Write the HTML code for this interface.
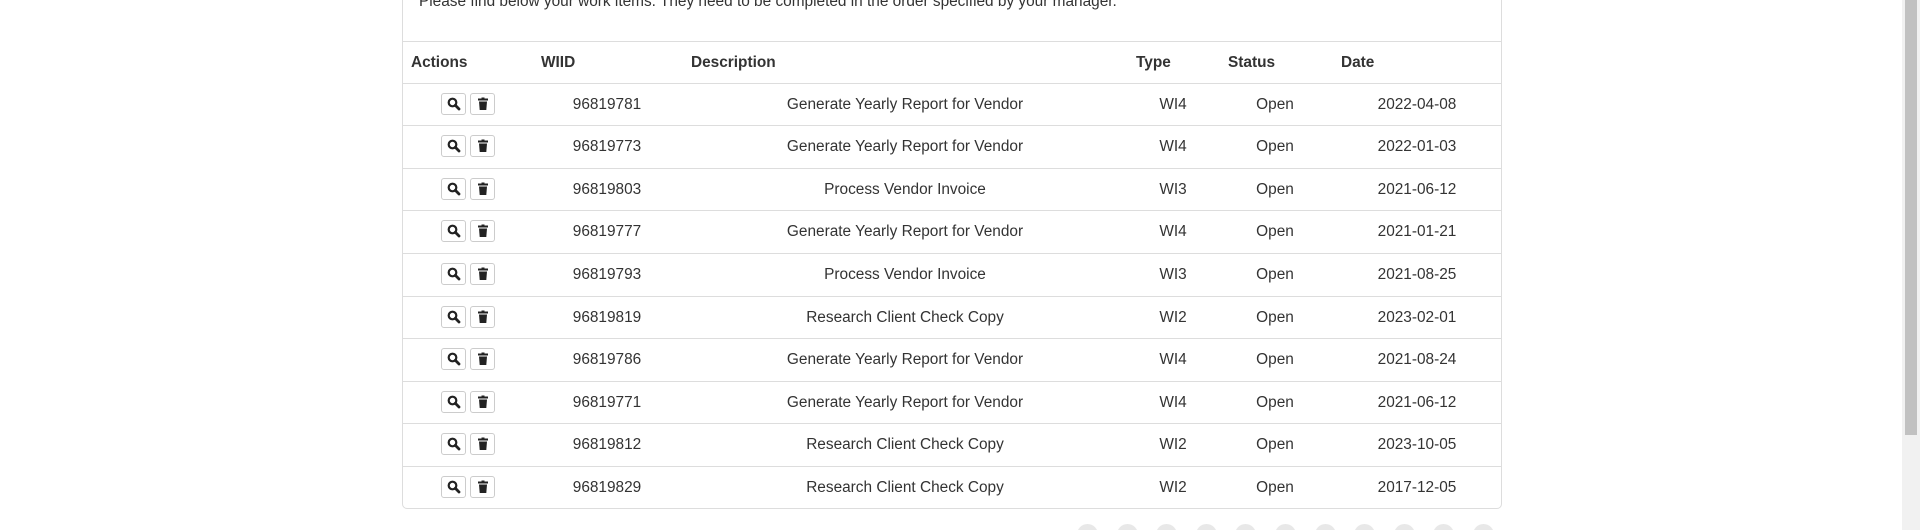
<!DOCTYPE html>
<html><head><meta charset="utf-8"><style>
html,body{margin:0;padding:0;width:1920px;height:530px;overflow:hidden;background:#fff;font-family:"Liberation Sans",Arial,sans-serif;color:#333;font-size:15.4px;}
.wrap{position:absolute;left:0;top:0;width:1920px;height:530px;overflow:hidden;}
.panel{position:absolute;left:402px;top:-10px;width:1098px;height:517px;border:1px solid #ddd;border-radius:0 0 5px 5px;}
.intro{position:absolute;left:419px;top:-7px;white-space:nowrap;}
.hline{position:absolute;left:403px;width:1098px;height:1px;background:#ddd;}
.hd{position:absolute;top:54px;font-weight:bold;white-space:nowrap;}
.row{position:absolute;left:403px;width:1098px;height:42px;border-top:1px solid #ddd;}
.c{position:absolute;top:12px;white-space:nowrap;transform:translateX(-50%);}
.btn{position:absolute;top:9px;width:25px;height:22px;border:1px solid #ccc;border-radius:3px;background:#fff;box-sizing:border-box;}
.btn svg{position:absolute;left:5px;top:3px;}
.dot{position:absolute;width:21px;height:21px;border-radius:50%;background:#e8e8e8;top:524px;}
.sb{position:absolute;left:1902px;top:0;width:18px;height:530px;background:#f1f1f1;}
.thumb{position:absolute;left:1905px;top:0;width:12px;height:435px;background:#c1c1c1;}
</style></head><body><div class="wrap">
<div class="panel"></div>
<div class="intro">Please find below your work items. They need to be completed in the order specified by your manager.</div>
<div class="hline" style="top:41px"></div>
<div class="hd" style="left:411px">Actions</div>
<div class="hd" style="left:541px">WIID</div>
<div class="hd" style="left:691px">Description</div>
<div class="hd" style="left:1136px">Type</div>
<div class="hd" style="left:1228px">Status</div>
<div class="hd" style="left:1341px">Date</div>

<div class="row" style="top:83px"><div class="btn" style="left:38px"><svg width="14" height="14" viewBox="0 0 14 14"><circle cx="5.5" cy="5.5" r="3.8" fill="none" stroke="#222" stroke-width="2.2"/><path d="M8.3 8.3 L12 12" stroke="#222" stroke-width="2.8" stroke-linecap="round"/></svg></div><div class="btn" style="left:67px"><svg width="14" height="14" viewBox="0 0 14 14"><rect x="2" y="1.5" width="10" height="2" fill="#222"/><rect x="5.5" y="0.5" width="3" height="1.5" fill="#222"/><path d="M3 4.5 H11 L10.3 13 H3.7 Z" fill="#222"/></svg></div><div class="c" style="left:204px">96819781</div><div class="c" style="left:502px">Generate Yearly Report for Vendor</div><div class="c" style="left:770px">WI4</div><div class="c" style="left:872px">Open</div><div class="c" style="left:1014px">2022-04-08</div></div>

<div class="row" style="top:125px"><div class="btn" style="left:38px"><svg width="14" height="14" viewBox="0 0 14 14"><circle cx="5.5" cy="5.5" r="3.8" fill="none" stroke="#222" stroke-width="2.2"/><path d="M8.3 8.3 L12 12" stroke="#222" stroke-width="2.8" stroke-linecap="round"/></svg></div><div class="btn" style="left:67px"><svg width="14" height="14" viewBox="0 0 14 14"><rect x="2" y="1.5" width="10" height="2" fill="#222"/><rect x="5.5" y="0.5" width="3" height="1.5" fill="#222"/><path d="M3 4.5 H11 L10.3 13 H3.7 Z" fill="#222"/></svg></div><div class="c" style="left:204px">96819773</div><div class="c" style="left:502px">Generate Yearly Report for Vendor</div><div class="c" style="left:770px">WI4</div><div class="c" style="left:872px">Open</div><div class="c" style="left:1014px">2022-01-03</div></div>

<div class="row" style="top:168px"><div class="btn" style="left:38px"><svg width="14" height="14" viewBox="0 0 14 14"><circle cx="5.5" cy="5.5" r="3.8" fill="none" stroke="#222" stroke-width="2.2"/><path d="M8.3 8.3 L12 12" stroke="#222" stroke-width="2.8" stroke-linecap="round"/></svg></div><div class="btn" style="left:67px"><svg width="14" height="14" viewBox="0 0 14 14"><rect x="2" y="1.5" width="10" height="2" fill="#222"/><rect x="5.5" y="0.5" width="3" height="1.5" fill="#222"/><path d="M3 4.5 H11 L10.3 13 H3.7 Z" fill="#222"/></svg></div><div class="c" style="left:204px">96819803</div><div class="c" style="left:502px">Process Vendor Invoice</div><div class="c" style="left:770px">WI3</div><div class="c" style="left:872px">Open</div><div class="c" style="left:1014px">2021-06-12</div></div>

<div class="row" style="top:210px"><div class="btn" style="left:38px"><svg width="14" height="14" viewBox="0 0 14 14"><circle cx="5.5" cy="5.5" r="3.8" fill="none" stroke="#222" stroke-width="2.2"/><path d="M8.3 8.3 L12 12" stroke="#222" stroke-width="2.8" stroke-linecap="round"/></svg></div><div class="btn" style="left:67px"><svg width="14" height="14" viewBox="0 0 14 14"><rect x="2" y="1.5" width="10" height="2" fill="#222"/><rect x="5.5" y="0.5" width="3" height="1.5" fill="#222"/><path d="M3 4.5 H11 L10.3 13 H3.7 Z" fill="#222"/></svg></div><div class="c" style="left:204px">96819777</div><div class="c" style="left:502px">Generate Yearly Report for Vendor</div><div class="c" style="left:770px">WI4</div><div class="c" style="left:872px">Open</div><div class="c" style="left:1014px">2021-01-21</div></div>

<div class="row" style="top:253px"><div class="btn" style="left:38px"><svg width="14" height="14" viewBox="0 0 14 14"><circle cx="5.5" cy="5.5" r="3.8" fill="none" stroke="#222" stroke-width="2.2"/><path d="M8.3 8.3 L12 12" stroke="#222" stroke-width="2.8" stroke-linecap="round"/></svg></div><div class="btn" style="left:67px"><svg width="14" height="14" viewBox="0 0 14 14"><rect x="2" y="1.5" width="10" height="2" fill="#222"/><rect x="5.5" y="0.5" width="3" height="1.5" fill="#222"/><path d="M3 4.5 H11 L10.3 13 H3.7 Z" fill="#222"/></svg></div><div class="c" style="left:204px">96819793</div><div class="c" style="left:502px">Process Vendor Invoice</div><div class="c" style="left:770px">WI3</div><div class="c" style="left:872px">Open</div><div class="c" style="left:1014px">2021-08-25</div></div>

<div class="row" style="top:296px"><div class="btn" style="left:38px"><svg width="14" height="14" viewBox="0 0 14 14"><circle cx="5.5" cy="5.5" r="3.8" fill="none" stroke="#222" stroke-width="2.2"/><path d="M8.3 8.3 L12 12" stroke="#222" stroke-width="2.8" stroke-linecap="round"/></svg></div><div class="btn" style="left:67px"><svg width="14" height="14" viewBox="0 0 14 14"><rect x="2" y="1.5" width="10" height="2" fill="#222"/><rect x="5.5" y="0.5" width="3" height="1.5" fill="#222"/><path d="M3 4.5 H11 L10.3 13 H3.7 Z" fill="#222"/></svg></div><div class="c" style="left:204px">96819819</div><div class="c" style="left:502px">Research Client Check Copy</div><div class="c" style="left:770px">WI2</div><div class="c" style="left:872px">Open</div><div class="c" style="left:1014px">2023-02-01</div></div>

<div class="row" style="top:338px"><div class="btn" style="left:38px"><svg width="14" height="14" viewBox="0 0 14 14"><circle cx="5.5" cy="5.5" r="3.8" fill="none" stroke="#222" stroke-width="2.2"/><path d="M8.3 8.3 L12 12" stroke="#222" stroke-width="2.8" stroke-linecap="round"/></svg></div><div class="btn" style="left:67px"><svg width="14" height="14" viewBox="0 0 14 14"><rect x="2" y="1.5" width="10" height="2" fill="#222"/><rect x="5.5" y="0.5" width="3" height="1.5" fill="#222"/><path d="M3 4.5 H11 L10.3 13 H3.7 Z" fill="#222"/></svg></div><div class="c" style="left:204px">96819786</div><div class="c" style="left:502px">Generate Yearly Report for Vendor</div><div class="c" style="left:770px">WI4</div><div class="c" style="left:872px">Open</div><div class="c" style="left:1014px">2021-08-24</div></div>

<div class="row" style="top:381px"><div class="btn" style="left:38px"><svg width="14" height="14" viewBox="0 0 14 14"><circle cx="5.5" cy="5.5" r="3.8" fill="none" stroke="#222" stroke-width="2.2"/><path d="M8.3 8.3 L12 12" stroke="#222" stroke-width="2.8" stroke-linecap="round"/></svg></div><div class="btn" style="left:67px"><svg width="14" height="14" viewBox="0 0 14 14"><rect x="2" y="1.5" width="10" height="2" fill="#222"/><rect x="5.5" y="0.5" width="3" height="1.5" fill="#222"/><path d="M3 4.5 H11 L10.3 13 H3.7 Z" fill="#222"/></svg></div><div class="c" style="left:204px">96819771</div><div class="c" style="left:502px">Generate Yearly Report for Vendor</div><div class="c" style="left:770px">WI4</div><div class="c" style="left:872px">Open</div><div class="c" style="left:1014px">2021-06-12</div></div>

<div class="row" style="top:423px"><div class="btn" style="left:38px"><svg width="14" height="14" viewBox="0 0 14 14"><circle cx="5.5" cy="5.5" r="3.8" fill="none" stroke="#222" stroke-width="2.2"/><path d="M8.3 8.3 L12 12" stroke="#222" stroke-width="2.8" stroke-linecap="round"/></svg></div><div class="btn" style="left:67px"><svg width="14" height="14" viewBox="0 0 14 14"><rect x="2" y="1.5" width="10" height="2" fill="#222"/><rect x="5.5" y="0.5" width="3" height="1.5" fill="#222"/><path d="M3 4.5 H11 L10.3 13 H3.7 Z" fill="#222"/></svg></div><div class="c" style="left:204px">96819812</div><div class="c" style="left:502px">Research Client Check Copy</div><div class="c" style="left:770px">WI2</div><div class="c" style="left:872px">Open</div><div class="c" style="left:1014px">2023-10-05</div></div>

<div class="row" style="top:466px"><div class="btn" style="left:38px"><svg width="14" height="14" viewBox="0 0 14 14"><circle cx="5.5" cy="5.5" r="3.8" fill="none" stroke="#222" stroke-width="2.2"/><path d="M8.3 8.3 L12 12" stroke="#222" stroke-width="2.8" stroke-linecap="round"/></svg></div><div class="btn" style="left:67px"><svg width="14" height="14" viewBox="0 0 14 14"><rect x="2" y="1.5" width="10" height="2" fill="#222"/><rect x="5.5" y="0.5" width="3" height="1.5" fill="#222"/><path d="M3 4.5 H11 L10.3 13 H3.7 Z" fill="#222"/></svg></div><div class="c" style="left:204px">96819829</div><div class="c" style="left:502px">Research Client Check Copy</div><div class="c" style="left:770px">WI2</div><div class="c" style="left:872px">Open</div><div class="c" style="left:1014px">2017-12-05</div></div>

<div class="dot" style="left:1077px"></div><div class="dot" style="left:1117px"></div><div class="dot" style="left:1156px"></div><div class="dot" style="left:1196px"></div><div class="dot" style="left:1235px"></div><div class="dot" style="left:1275px"></div><div class="dot" style="left:1315px"></div><div class="dot" style="left:1354px"></div><div class="dot" style="left:1394px"></div><div class="dot" style="left:1433px"></div><div class="dot" style="left:1473px"></div>
<div class="sb"></div><div class="thumb"></div>
</div></body></html>
